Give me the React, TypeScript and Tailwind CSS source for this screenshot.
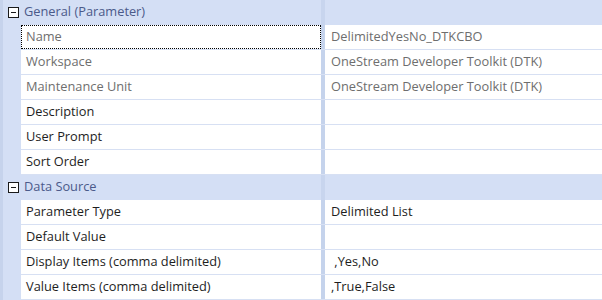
// Property grid — two categories of parameter properties with a name/value
// splitter, as seen in the OneStream dashboard parameter editor.

type Prop = { name: string; value?: string; readOnly?: boolean; focused?: boolean };
type Category = { title: string; props: Prop[] };

const categories: Category[] = [
  {
    title: 'General (Parameter)',
    props: [
      { name: 'Name', value: 'DelimitedYesNo_DTKCBO', readOnly: true, focused: true },
      { name: 'Workspace', value: 'OneStream Developer Toolkit (DTK)', readOnly: true },
      { name: 'Maintenance Unit', value: 'OneStream Developer Toolkit (DTK)', readOnly: true },
      { name: 'Description' },
      { name: 'User Prompt' },
      { name: 'Sort Order' },
    ],
  },
  {
    title: 'Data Source',
    props: [
      { name: 'Parameter Type', value: 'Delimited List' },
      { name: 'Default Value' },
      { name: 'Display Items (comma delimited)', value: ' ,Yes,No' },
      { name: 'Value Items (comma delimited)', value: ',True,False' },
    ],
  },
];

function CollapseBox() {
  return (
    <span className="flex h-[11px] w-[11px] items-center justify-center border border-[#1a1a1a] bg-white">
      <span className="h-px w-[5px] bg-[#1a1a1a]" />
    </span>
  );
}

function CategoryRow({ title }: { title: string }) {
  return (
    <div className="flex h-[25px] bg-[#d4dff5]">
      <div className="flex w-[21px] shrink-0 items-center border-l-[3px] border-[#c6d3ec] pl-[5px]">
        <CollapseBox />
      </div>
      <div className="flex w-[300px] shrink-0 items-center pb-px pl-[3px] text-[#4b5a8a]">{title}</div>
      <div className="w-[4px] shrink-0 bg-[#c8d5ee]" />
      <div className="flex-1" />
    </div>
  );
}

function PropRow({ prop }: { prop: Prop }) {
  const tone = prop.readOnly ? 'text-[#6e6e6e]' : 'text-[#1e1e1e]';
  return (
    <div className="flex h-[25px]">
      <div className="w-[21px] shrink-0 border-l-[3px] border-[#c6d3ec] bg-[#d4dff5]" />
      <div className="flex flex-1 border-b border-[#d7e0f3] bg-white">
        <div
          className={`flex w-[300px] shrink-0 items-center pl-[5px] ${tone} ${
            prop.focused ? 'outline-1 -outline-offset-1 outline-dotted outline-black' : ''
          }`}
        >
          {prop.name}
        </div>
        <div className="w-[4px] shrink-0 bg-[#c5d3ec]" />
        <div className={`flex flex-1 items-center whitespace-pre pl-[6px] ${tone}`}>{prop.value ?? ''}</div>
      </div>
    </div>
  );
}

export default function App() {
  return (
    <div
      className="h-[300px] w-[602px] overflow-hidden bg-white text-[12.8px]"
      style={{ fontFamily: '"Segoe UI", "Open Sans", sans-serif' }}
    >
      {categories.map((cat) => (
        <div key={cat.title}>
          <CategoryRow title={cat.title} />
          {cat.props.map((p) => (
            <PropRow key={p.name} prop={p} />
          ))}
        </div>
      ))}
    </div>
  );
}
